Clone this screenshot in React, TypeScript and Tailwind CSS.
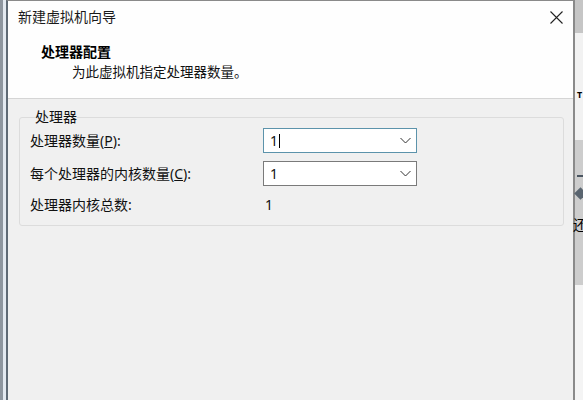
import React from "react";

const font = { fontFamily: '"Noto Sans", "Noto Sans CJK SC", sans-serif' };

function Chevron() {
  return (
    <svg width="11" height="7" viewBox="0 0 11 7" className="shrink-0">
      <path d="M0.5 1 L5.5 6 L10.5 1" fill="none" stroke="#333" strokeWidth="1" />
    </svg>
  );
}

function Combo({ value, focused }: { value: string; focused?: boolean }) {
  return (
    <div
      className={
        "w-[154px] h-[25px] bg-white flex items-center justify-between pl-[6px] pr-[5px] border " +
        (focused ? "border-[#5c93ab]" : "border-[#7a7a7a]")
      }
    >
      <span className="flex items-center text-[14px] leading-[20px] text-[#111]">
        {value}
        {focused && <span className="ml-[1px] w-px h-[14px] bg-black" />}
      </span>
      <Chevron />
    </div>
  );
}

export default function App() {
  return (
    <div className="w-[583px] h-[400px] flex bg-[#f0f0f0] overflow-hidden" style={font}>
      {/* window behind, left edge */}
      <div className="w-[6px] h-full border-l-[3px] border-[#8e969f] bg-[#e3e9f0]" />

      {/* dialog */}
      <div className="w-[569px] h-full flex flex-col border-l-2 border-r-2 border-t border-l-[#5f6a75] border-r-[#8a8a8a] border-t-[#8a8a8a]">
        {/* header */}
        <div className="h-[98px] shrink-0 bg-[#fefefe] border-b border-[#d5d5d5] flex flex-col">
          <div className="flex justify-between items-start pt-[6px] pl-[10px] pr-[10px]">
            <span className="text-[14px] leading-[20px] text-[#1a1a1a]">新建虚拟机向导</span>
            <svg width="13" height="13" viewBox="0 0 13 13" className="mt-[4px]">
              <path d="M0.5 0.5 L12.5 12.5 M12.5 0.5 L0.5 12.5" stroke="#222" strokeWidth="1.1" />
            </svg>
          </div>
          <div className="mt-[15px] pl-[33px] text-[14px] leading-[20px] font-bold text-black">处理器配置</div>
          <div className="pl-[64px] text-[13.5px] leading-[20px] text-[#111]">为此虚拟机指定处理器数量。</div>
        </div>

        {/* body */}
        <div className="flex-1 bg-[#f0f0f0] pt-[8px] pl-[11px] pr-[9px]">
          <fieldset className="border border-[#dcdcdc] rounded-[3px] pl-[10px] pr-[8px] pb-[8px]">
            <legend className="ml-[5px] text-[14px] leading-[20px] text-[#111]">处理器</legend>
            <div className="grid grid-cols-[233px_154px] items-center text-[14px] leading-[20px] text-[#111]">
              <span className="mt-[1px]">
                处理器数量(<u>P</u>):
              </span>
              <div className="mt-[1px]">
                <Combo value="1" focused />
              </div>
              <span className="mt-[8px]">
                每个处理器的内核数量(<u>C</u>):
              </span>
              <div className="mt-[8px]">
                <Combo value="1" />
              </div>
              <span className="mt-[6px] h-[25px] flex items-center">处理器内核总数:</span>
              <span className="mt-[6px] h-[25px] flex items-center pl-[2px]">1</span>
            </div>
          </fieldset>
        </div>
      </div>

      {/* window behind, right edge */}
      <div className="w-[8px] h-full flex flex-col text-[12px] leading-none text-black">
        <div className="h-[33px] bg-[#c6c6c6]" />
        <div className="h-[107px] bg-[#f2f2f2] pt-[57px] pl-[2px] font-bold text-[9px]">T</div>
        <div className="h-[145px] bg-[#cdcdcd] flex flex-col pt-[35px]">
          <div className="h-[2px] w-[6px] bg-[#4a5560] ml-[2px]" />
          <div className="mt-[12px] ml-[1px] w-[9px] h-[9px] rotate-45 bg-[#5a6570]" />
          <div className="mt-[20px] text-[14px] -ml-[2px]">还</div>
        </div>
        <div className="flex-1 bg-[#f4f4f4]" />
      </div>
    </div>
  );
}
